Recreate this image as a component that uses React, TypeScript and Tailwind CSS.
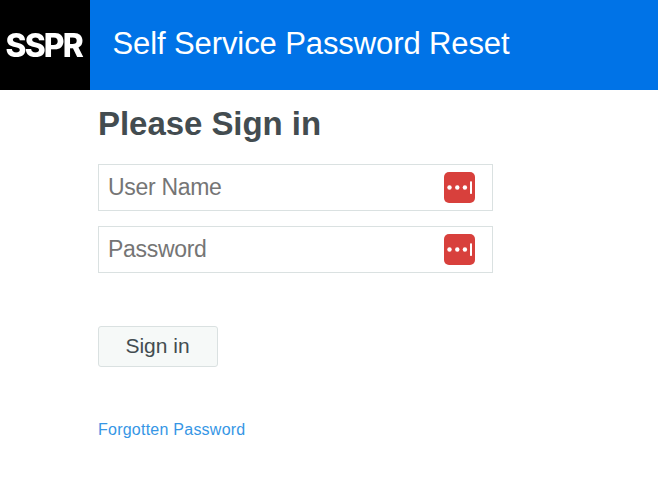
const fields = [
  { name: "username", type: "text", label: "User Name" },
  { name: "password", type: "password", label: "Password" },
];

function Logo() {
  return (
    <svg width="90" height="90" viewBox="0 0 90 90">
      <filter id="soften">
        <feGaussianBlur stdDeviation="0.6" />
      </filter>
      <text
        x="5.5"
        y="56.5"
        textLength="76.5"
        lengthAdjust="spacingAndGlyphs"
        letterSpacing="-1.8"
        fill="#fff"
        fontSize="32"
        fontWeight="800"
        filter="url(#soften)"
      >
        SSPR
      </text>
    </svg>
  );
}

function ManagerIcon() {
  return (
    <svg viewBox="0 0 31 31" className="h-[31px] w-[31px]" aria-hidden="true">
      <rect width="31" height="31" rx="5" fill="#d8403c" />
      <circle cx="5.5" cy="15.5" r="2.2" fill="#fff" />
      <circle cx="13.3" cy="15.5" r="2.2" fill="#fff" />
      <circle cx="20.9" cy="15.5" r="2.2" fill="#fff" />
      <rect x="26" y="9.3" width="2" height="12.7" rx="0.8" fill="#fff" />
    </svg>
  );
}

export default function App() {
  return (
    <div className="min-h-screen bg-white font-['Liberation_Sans',Arial,sans-serif] text-[#434c50]">
      <header className="flex h-[90px] items-center bg-[#0073e7] text-white">
        <div className="h-[90px] w-[90px] bg-black font-[Inter,sans-serif]">
          <Logo />
        </div>
        <span className="ml-[22.5px] pb-px text-[31px] tracking-[-0.1px]">Self Service Password Reset</span>
      </header>

      <main className="pl-[98px] pt-[13px]">
        <h1 className="text-[33px] leading-[42px] font-bold tracking-[-0.05px]">Please Sign in</h1>
        <form className="mt-[19px] flex w-[395px] flex-col gap-[15px]">
          {fields.map((field) => (
            <label key={field.name} className="flex h-[47px] items-center border border-[#dae1e1] pr-[17px] pl-[9px]">
              <input
                name={field.name}
                type={field.type}
                placeholder={field.label}
                className="min-w-0 flex-1 text-[23px] tracking-[-0.3px] outline-none placeholder:text-[#757575]"
              />
              <ManagerIcon />
            </label>
          ))}
          <button
            type="button"
            className="mt-[38px] h-[41px] w-[120px] rounded-[3px] border border-[#dae1e1] bg-[#f6f9f8] pr-px pb-0.5 text-[21px]"
          >
            Sign in
          </button>
        </form>
        <a href="#" className="mt-[51px] inline-block text-[16px] tracking-[0.24px] text-[#3696e5]">
          Forgotten Password
        </a>
      </main>
    </div>
  );
}
